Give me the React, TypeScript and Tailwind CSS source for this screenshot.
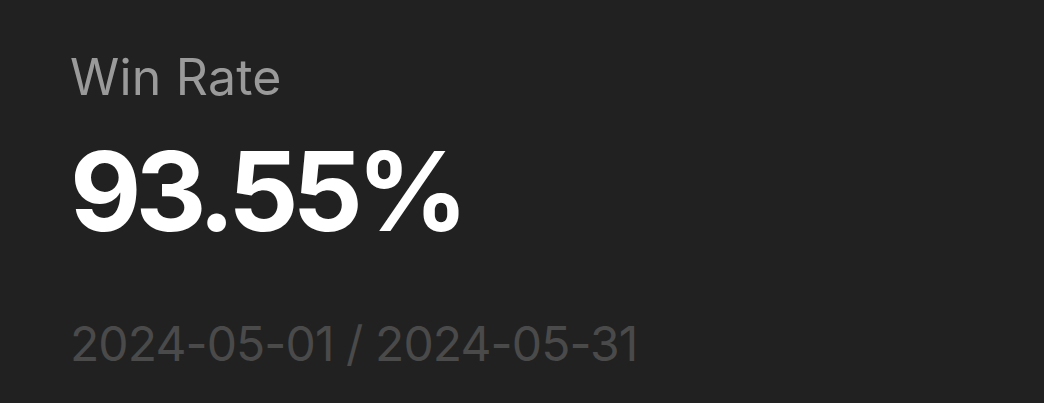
export default function App() {
  return (
    <div className="flex h-[403px] w-[1044px] flex-col bg-[#212121] pl-[70px] pt-[47px] font-['Inter',sans-serif]">
      <div className="text-[50px] leading-[60px] tracking-[0.2px] text-[#9a9a9a]">Win Rate</div>
      <div className="mt-[29px] text-[110px] font-bold leading-[110px] tracking-[-6px] text-white">93.55%</div>
      <div className="mt-[68px] text-[48px] leading-[60px] tracking-[-0.9px] text-[#4a4a4a]">2024-05-01 / 2024-05-31</div>
    </div>
  );
}
